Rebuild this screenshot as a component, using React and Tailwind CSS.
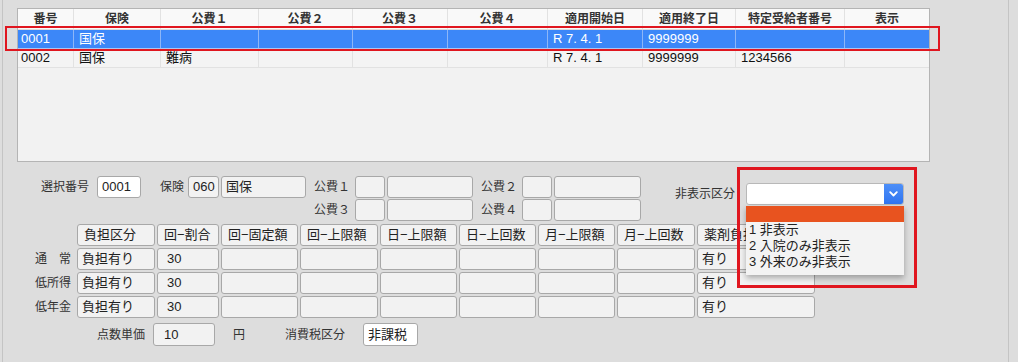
import React from "react";

const font = { fontFamily: '"Liberation Sans", "Noto Sans CJK JP", sans-serif' };

const columns = [
  { label: "番号", w: "w-[56px]" },
  { label: "保険", w: "w-[87px]" },
  { label: "公費１", w: "w-[98px]" },
  { label: "公費２", w: "w-[94px]" },
  { label: "公費３", w: "w-[95px]" },
  { label: "公費４", w: "w-[100px]" },
  { label: "適用開始日", w: "w-[95px]" },
  { label: "適用終了日", w: "w-[93px]" },
  { label: "特定受給者番号", w: "w-[109px]" },
  { label: "表示", w: "w-[85px]" },
];

const rows = [
  ["0001", "国保", "", "", "", "", "R 7. 4. 1", "9999999", "", ""],
  ["0002", "国保", "難病", "", "", "", "R 7. 4. 1", "9999999", "1234566", ""],
];

const gridHead = ["負担区分", "回−割合", "回−固定額", "回−上限額", "日−上限額", "日−上回数", "月−上限額", "月−上回数", "薬剤負担"];
const gridRows = [
  { label: "通　常", vals: ["負担有り", "30", "", "", "", "", "", "", "有り"] },
  { label: "低所得", vals: ["負担有り", "30", "", "", "", "", "", "", "有り"] },
  { label: "低年金", vals: ["負担有り", "30", "", "", "", "", "", "", "有り"] },
];

const Box = ({ w, white, children, className = "" }) => (
  <div
    className={`${w} h-[22px] border border-[#a8a8a8] rounded-[3px] ${white ? "bg-white" : "bg-[#f2f2f2]"} flex items-center pl-[4px] text-[13px] text-[#222] overflow-hidden whitespace-nowrap ${className}`}
  >
    {children}
  </div>
);

const Label = ({ w, children, className = "" }) => (
  <div className={`${w} text-right text-[12px] text-[#333] whitespace-nowrap ${className}`}>{children}</div>
);

export default function App() {
  return (
    <div className="w-[1018px] h-[362px] bg-[#dddddd] overflow-hidden relative" style={font}>
      <div className="ml-[2px] w-[1007px] h-[362px] border-l border-r border-[#c4c4c4] pt-[8px]">
        {/* list table */}
        <div className="ml-[14px] w-[913px] h-[154px] border border-[#b4b4b4] bg-[#f2f2f2] overflow-hidden">
          <div className="flex h-[21px] bg-[#f9f9f9] border-b border-[#dcdcdc]">
            {columns.map((c) => (
              <div
                key={c.label}
                className={`${c.w} shrink-0 border-r border-[#e2e2e2] flex items-center justify-center text-[12px] font-semibold text-[#333]`}
              >
                {c.label}
              </div>
            ))}
          </div>
          {rows.map((r, i) => {
            const sel = i === 0;
            return (
              <div
                key={i}
                className={`flex h-[19px] border-b ${sel ? "bg-[#3c87f8] border-[#a9c6f2]" : "bg-[#f4f4f4] border-[#e2e2e2]"}`}
              >
                {r.map((v, j) => (
                  <div
                    key={j}
                    className={`${columns[j].w} shrink-0 border-r ${sel ? "border-[#8db6f7] text-white" : "border-[#e2e2e2] text-[#111]"} flex items-center ${j === 0 ? "pl-[3px]" : "pl-[5px]"} text-[13px] whitespace-nowrap`}
                  >
                    {v}
                  </div>
                ))}
              </div>
            );
          })}
        </div>

        {/* header fields */}
        <div className="flex mt-[14px]">
          <div className="flex flex-col gap-[1px]">
            <div className="flex items-center h-[22px]">
              <Label w="w-[94px]" className="pr-[8px]">選択番号</Label>
              <Box w="w-[44px]" white>0001</Box>
              <Label w="w-[47px]" className="pr-[4px]">保険</Label>
              <Box w="w-[31px]">060</Box>
              <Box w="w-[85px]" className="ml-[2px]">国保</Box>
              <Label w="w-[49px]" className="pr-[5px]">公費１</Label>
              <Box w="w-[30px]" />
              <Box w="w-[86px]" className="ml-[2px]" />
              <Label w="w-[49px]" className="pr-[5px]">公費２</Label>
              <Box w="w-[30px]" />
              <Box w="w-[87px]" className="ml-[2px]" />
            </div>
            <div className="flex items-center h-[22px]">
              <Label w="w-[352px]" className="pr-[5px]">公費３</Label>
              <Box w="w-[30px]" />
              <Box w="w-[86px]" className="ml-[2px]" />
              <Label w="w-[49px]" className="pr-[5px]">公費４</Label>
              <Box w="w-[30px]" />
              <Box w="w-[87px]" className="ml-[2px]" />
            </div>
          </div>
          <div className="flex items-center h-[22px] mt-[7px]">
            <Label w="w-[105px]" className="pr-[11px]">非表示区分</Label>
            <div className="w-[158px] h-[22px] flex border border-[#b8b8b8] rounded-[3px] bg-white overflow-hidden">
              <div className="flex-1" />
              <div className="w-[19px] h-full bg-gradient-to-b from-[#4d8ff8] to-[#2f74f0] flex items-center justify-center">
                <svg width="9" height="6" viewBox="0 0 9 6">
                  <path d="M1.2 1.2 L4.5 4.5 L7.8 1.2" fill="none" stroke="white" strokeWidth="1.8" strokeLinecap="round" strokeLinejoin="round" />
                </svg>
              </div>
            </div>
          </div>
        </div>

        {/* burden grid */}
        <div className="mt-[3px] grid grid-cols-[72px_78px_62px_77px_78px_77px_77px_77px_78px_118px] gap-x-[2px] gap-y-[2px]">
          <div />
          {gridHead.map((h) => (
            <Box key={h} w="w-full" className="pl-[6px]">{h}</Box>
          ))}
          {gridRows.map((r) => (
            <React.Fragment key={r.label}>
              <Label w="w-full" className="pr-[4px] self-center">{r.label}</Label>
              {r.vals.map((v, j) => (
                <Box key={j} w="w-full" className={j === 1 ? "pl-[9px]" : "pl-[3px]"}>{v}</Box>
              ))}
            </React.Fragment>
          ))}
        </div>

        {/* bottom row */}
        <div className="flex items-center mt-[5px] h-[23px]">
          <Label w="w-[150px]" className="pr-[8px]">点数単価</Label>
          <Box w="w-[62px]" className="h-[23px] pl-[10px]">10</Box>
          <span className="ml-[18px] text-[12px] text-[#333]">円</span>
          <span className="ml-[40px] text-[12px] text-[#333]">消費税区分</span>
          <Box w="w-[55px]" white className="ml-[18px] h-[23px] text-[12px]">非課税</Box>
        </div>
      </div>

      {/* open dropdown list */}
      <div className="absolute left-[746px] top-[206px] w-[158px] bg-[#f3f3f3] shadow-[0_3px_6px_rgba(0,0,0,0.3)] text-[13px] text-[#222] leading-[16px]">
        <div className="h-[16px] bg-[#e8531f]" />
        <div className="pl-[3px]">1 非表示</div>
        <div className="pl-[3px]">2 入院のみ非表示</div>
        <div className="pl-[3px] pb-[5px]">3 外来のみ非表示</div>
      </div>

      {/* annotation frames */}
      <div className="absolute left-[5px] top-[26px] w-[935px] h-[25px] border-2 border-[#e0161f]" />
      <div className="absolute left-[737px] top-[167px] w-[180px] h-[121px] border-[3px] border-[#e0161f]" />
    </div>
  );
}
